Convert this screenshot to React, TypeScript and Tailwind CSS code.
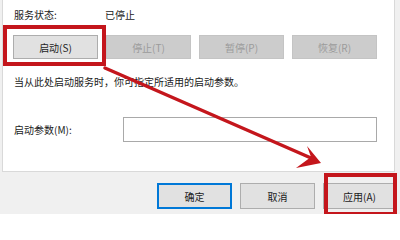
const font = { fontFamily: '"Noto Sans CJK SC", "Noto Sans", sans-serif' };

function Btn({ label, disabled }: { label: string; disabled?: boolean }) {
  return (
    <div
      className={
        'w-[85px] h-[24px] flex items-center justify-center text-[10px] border ' +
        (disabled
          ? 'bg-[#cccccc] border-[#c4c4c4] text-[#9b9b9b]'
          : 'bg-[#e1e1e1] border-[#adadad] text-[#1e1e1e]')
      }
    >
      {label}
    </div>
  );
}

export default function App() {
  return (
    <div className="relative w-[400px] h-[214px] overflow-hidden bg-[#f0f0f0] flex flex-col" style={font}>
      <div className="ml-[2px] w-[393px] h-[172px] bg-white border-x border-b border-[#d9d9d9] pl-[10px] pt-[8px] flex flex-col text-[#1a1a1a]">
        <div className="flex h-[14px] leading-[14px] text-[10px] pl-[1px]">
          <span className="w-[91px]">服务状态:</span>
          <span>已停止</span>
        </div>
        <div className="flex gap-[8px] mt-[13px]">
          <Btn label="启动(S)" />
          <Btn label="停止(T)" disabled />
          <Btn label="暂停(P)" disabled />
          <Btn label="恢复(R)" disabled />
        </div>
        <div className="mt-[16px] h-[14px] leading-[14px] text-[10px] pl-[1px]">
          当从此处启动服务时，你可指定所适用的启动参数。
        </div>
        <div className="mt-[28px] flex items-center pl-[1px]">
          <span className="w-[109px] text-[10px]">启动参数(M):</span>
          <div className="w-[254px] h-[25px] bg-white border border-[#a9a9a9]" />
        </div>
      </div>
      <div className="flex justify-end gap-[8px] mt-[11px] pr-[4px] text-[10px] text-[#1a1a1a]">
        <div className="w-[75px] h-[26px] flex items-center justify-center bg-[#e1e1e1] border-2 border-[#0078d7]">确定</div>
        <div className="w-[75px] h-[26px] flex items-center justify-center bg-[#e1e1e1] border border-[#adadad]">取消</div>
        <div className="w-[73px] h-[26px] flex items-center justify-center bg-[#e1e1e1] border border-[#adadad]">应用(A)</div>
      </div>

      <div className="absolute left-[3px] top-[25px] w-[103px] h-[41px] border-[4px] border-[#c4161c]" />
      <div className="absolute left-[324px] top-[173px] w-[73px] h-[43px] border-[4px] border-[#c4161c]" />
      <svg className="absolute left-0 top-0 pointer-events-none" width="400" height="214" viewBox="0 0 400 214">
        <line x1="105" y1="68" x2="311" y2="158" stroke="#c4161c" strokeWidth="3.5" strokeLinecap="round" />
        <polygon points="321,163 307,146 311,157 296,168" fill="#c4161c" />
      </svg>
    </div>
  );
}
